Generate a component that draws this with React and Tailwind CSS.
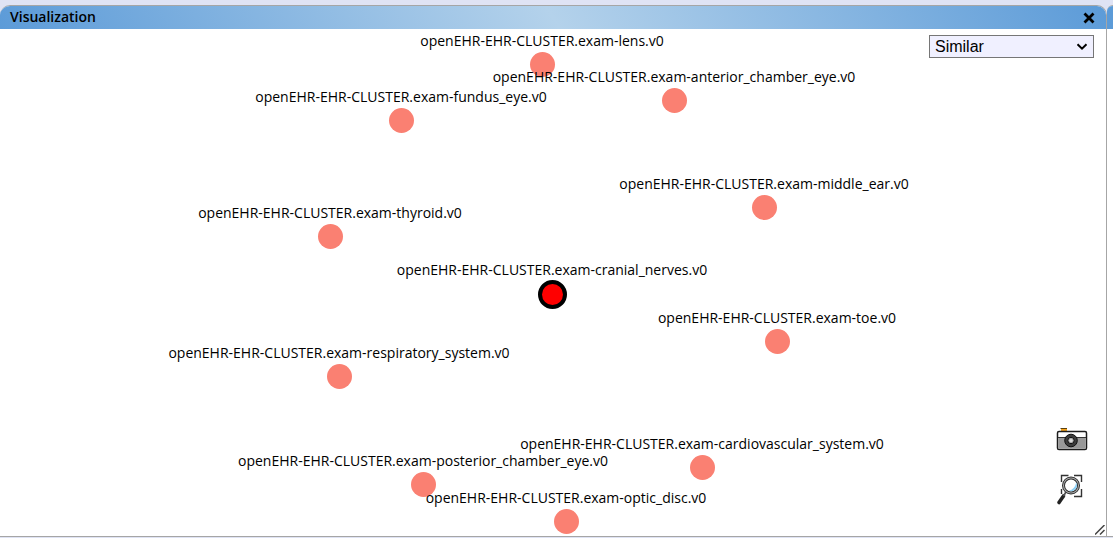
const nodes = [
  { name: 'lens', x: 542, y: 36 },
  { name: 'anterior_chamber_eye', x: 674, y: 72 },
  { name: 'fundus_eye', x: 401, y: 92 },
  { name: 'middle_ear', x: 764, y: 179 },
  { name: 'thyroid', x: 330, y: 208 },
  { name: 'cranial_nerves', x: 552, y: 265, selected: true },
  { name: 'toe', x: 777, y: 313 },
  { name: 'respiratory_system', x: 339, y: 348 },
  { name: 'cardiovascular_system', x: 702, y: 439 },
  { name: 'posterior_chamber_eye', x: 423, y: 456 },
  { name: 'optic_disc', x: 566, y: 493 },
];

const titleBar =
  'bg-[linear-gradient(60deg,#5c9bd8_0%,#b4d2eb_50%,#5c9bd8_100%)]';

function Node({ node }) {
  return (
    <div className="absolute size-0" style={{ left: node.x, top: node.y }}>
      <span
        className={
          node.selected
            ? 'absolute -left-3.5 -top-3.5 size-[29px] rounded-full border-4 border-black bg-[#ff0000]'
            : 'absolute -left-3 -top-[13px] size-[25px] rounded-full bg-[#fa8072]'
        }
      />
      <span className="absolute bottom-3.5 left-0 -translate-x-1/2 whitespace-nowrap text-sm leading-5">
        openEHR-EHR-CLUSTER.exam-{node.name}.v0
      </span>
    </div>
  );
}

function CameraIcon() {
  return (
    <svg className="block h-6 w-8" viewBox="0 0 32 24" aria-hidden="true">
      <rect x="5" y="1.5" width="6" height="3" fill="#f5a31a" />
      <path d="M4.500 1.500h6.500" stroke="#5a4010" strokeWidth="1" />
      <rect x="1.500" y="4.500" width="29" height="18" rx="1.500" fill="#fff" stroke="#1c1c1c" strokeWidth="1.500" />
      <path d="M2.200 10.500h27.600v10.300q0 1-1 1H3.200q-1 0-1-1z" fill="#999" />
      <path d="M2 10.500h28" stroke="#333" strokeWidth="1" />
      <circle cx="15" cy="13.500" r="6.300" fill="#3c3c3c" stroke="#111" />
      <circle cx="15" cy="13.500" r="3.200" fill="#aaa" stroke="#111" strokeWidth="1" />
      <circle cx="15" cy="13.500" r="1.600" fill="#ddd" />
    </svg>
  );
}

function ZoomFitIcon() {
  return (
    <svg className="block h-8 w-8" viewBox="0 0 32 32" aria-hidden="true">
      <path d="M5.500 8V1.500h7M18 1.500h7.500V8M25.500 15v7.500H18M5.500 15v5" fill="none" stroke="#333" strokeWidth="1.400" />
      <path d="M7.500 22l-4.500 6.500" stroke="#222" strokeWidth="3.600" strokeLinecap="round" />
      <path d="M10 18l-2.500 4" stroke="#555" strokeWidth="1.800" />
      <circle cx="15" cy="11.500" r="7.500" fill="#fff" stroke="#2b2b2b" strokeWidth="3" />
      <circle cx="15" cy="11.500" r="7.500" fill="none" stroke="#aaa" strokeWidth="1.100" />
      <path d="M20.300 8.500a6 6 0 0 1-7.500 8.300q6-1.500 7.500-8.300z" fill="#8fd0f5" />
    </svg>
  );
}

export default function App() {
  return (
    <div className="flex h-screen overflow-hidden bg-[#dfe3f4] pb-px pt-[5px] font-['Open_Sans','Noto_Sans',sans-serif] text-black">
      <section className="flex min-w-0 flex-1 flex-col overflow-hidden rounded-t-[10px] border-r border-t border-b border-[#a6a6a6] bg-white">
        <header className={`flex h-[23px] shrink-0 items-center justify-between px-2.5 ${titleBar}`}>
          <h1 className="pb-0.5 text-sm font-semibold leading-5">Visualization</h1>
          <button type="button" aria-label="Close" className="flex size-3.5 items-center justify-center">
            <svg className="size-3" viewBox="0 0 12 12" aria-hidden="true">
              <path d="M1.500 1.500l9 9M10.500 1.500l-9 9" stroke="#000" strokeWidth="2.800" />
            </svg>
          </button>
        </header>
        <main className="relative flex flex-1 flex-col items-end justify-between overflow-hidden pr-3 pt-1.5">
          {nodes.map((node) => (
            <Node key={node.name} node={node} />
          ))}
          <div className="relative">
            <select
              aria-label="Relation"
              className="block h-[23px] w-[165px] appearance-none border border-[#767676] bg-[#f0f0ff] pl-[5px] font-['Liberation_Sans',sans-serif] text-base leading-5"
            >
              <option>Similar</option>
              <option>Related</option>
            </select>
            <svg className="pointer-events-none absolute right-1.5 top-2 h-2 w-3" viewBox="0 0 12 8" aria-hidden="true">
              <path d="M1.500 1.200L6 5.700l4.500-4.500" fill="none" stroke="#000" strokeWidth="2" />
            </svg>
          </div>
          <div className="relative mb-[30px] mr-1.5 flex flex-col gap-[23px]">
            <button type="button" aria-label="Take snapshot">
              <CameraIcon />
            </button>
            <button type="button" aria-label="Zoom to fit">
              <ZoomFitIcon />
            </button>
          </div>
          <svg className="absolute bottom-px right-px size-2.5" viewBox="0 0 10 10" aria-hidden="true">
            <path d="M0 9.500L9.500 0M5 9.500L9.500 5" stroke="#444" strokeWidth="1.500" />
          </svg>
        </main>
      </section>
      <section className="flex w-1.5 shrink-0 flex-col overflow-hidden rounded-tl-[10px] border-b border-t border-[#a6a6a6] bg-white" aria-hidden="true">
        <div className="h-[23px] bg-[#5c9bd8]" />
      </section>
    </div>
  );
}
